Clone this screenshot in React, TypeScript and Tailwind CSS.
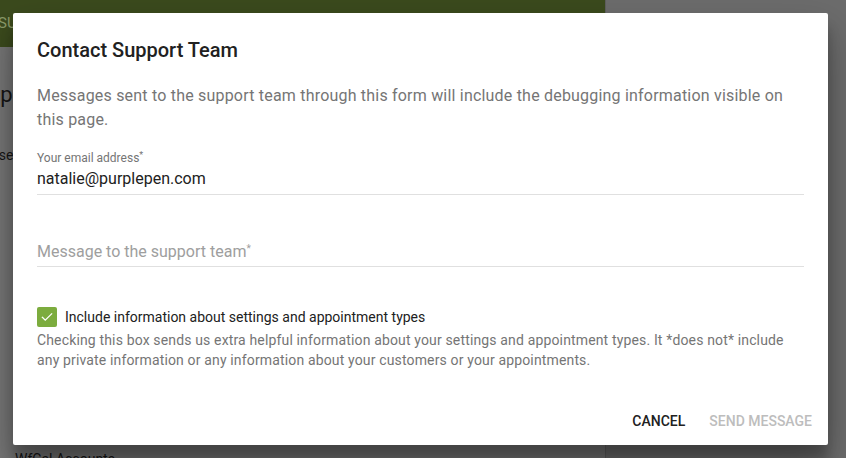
import React from "react";

export default function App() {
  return (
    <div
      className="relative w-[846px] h-[458px] overflow-hidden"
      style={{ fontFamily: "Roboto, 'Liberation Sans', sans-serif" }}
    >
      {/* underlying page (already dimmed by the modal backdrop) */}
      <div className="flex h-full w-full">
        <div className="flex w-[605px] flex-col bg-[#757575]">
          <div className="flex h-[47px] items-center bg-[#3b4a1d] text-[15px] text-[#8a9a6a]">
            <span className="-ml-[2px]">SUPPORT</span>
          </div>
          <div className="mt-[33px] -ml-[25px] whitespace-nowrap text-[22px] leading-[30px] text-[#151515]">Support</div>
          <div className="mt-[35px] -ml-[33px] whitespace-nowrap text-[14px] leading-[20px] text-[#151515]">Browse</div>
          <div className="mt-auto mb-[-12px] pl-[15px] text-[14px] text-[#151515]">WfCal Accounts</div>
        </div>
        <div className="flex-1 border-l border-[#5e5e5e] bg-[#6c6c6c]" />
      </div>

      {/* dialog */}
      <div className="absolute left-[13px] top-[13px] flex w-[815px] h-[432px] flex-col rounded-[2px] bg-white shadow-[0_19px_38px_rgba(0,0,0,0.30),0_15px_12px_rgba(0,0,0,0.22)]">
        <div className="px-[24px] pt-[23px] text-[20px] font-medium leading-[28px] text-[#212121]">
          Contact Support Team
        </div>
        <div className="px-[24px] pt-[20px]">
          <p className="text-[16px] leading-[24px] tracking-[0.2px] text-[#757575]">
            Messages sent to the support team through this form will include the debugging information visible on this page.
          </p>

          <div className="mt-[19px] border-b border-[#e0e0e0] pb-[5px]">
            <div className="text-[12px] leading-[14px] text-[#757575]">
              Your email address<sup className="text-[9px]">*</sup>
            </div>
            <div className="mt-[4px] text-[16px] leading-[20px] text-[#212121]">natalie@purplepen.com</div>
          </div>

          <div className="mt-[47px] border-b border-[#e0e0e0] pb-[4px]">
            <div className="text-[16px] leading-[20px] text-[#9e9e9e]">
              Message to the support team<sup className="text-[10px]">*</sup>
            </div>
          </div>

          <div className="mt-[40px] flex items-center gap-[8px]">
            <div className="flex h-[20px] w-[20px] items-center justify-center rounded-[2px] bg-[#7cac3e]">
              <svg width="14" height="14" viewBox="0 0 24 24" fill="none" stroke="white" strokeWidth="2.2" strokeLinecap="square">
                <path d="M4 12.5l5 5L20 6.5" />
              </svg>
            </div>
            <span className="text-[14px] leading-[20px] text-[#212121]">Include information about settings and appointment types</span>
          </div>
          <p className="mt-[3px] text-[14px] leading-[20px] tracking-[0.15px] text-[#757575]">
            Checking this box sends us extra helpful information about your settings and appointment types. It *does not* include any private information or any information about your customers or your appointments.
          </p>
        </div>

        <div className="mt-auto flex justify-end gap-[8px] px-[8px] pb-[6px]">
          <button className="h-[36px] px-[8px] text-[14px] font-medium uppercase text-[#212121]">Cancel</button>
          <button className="h-[36px] px-[8px] text-[14px] font-medium uppercase text-[#bdbdbd]">Send Message</button>
        </div>
      </div>
    </div>
  );
}
